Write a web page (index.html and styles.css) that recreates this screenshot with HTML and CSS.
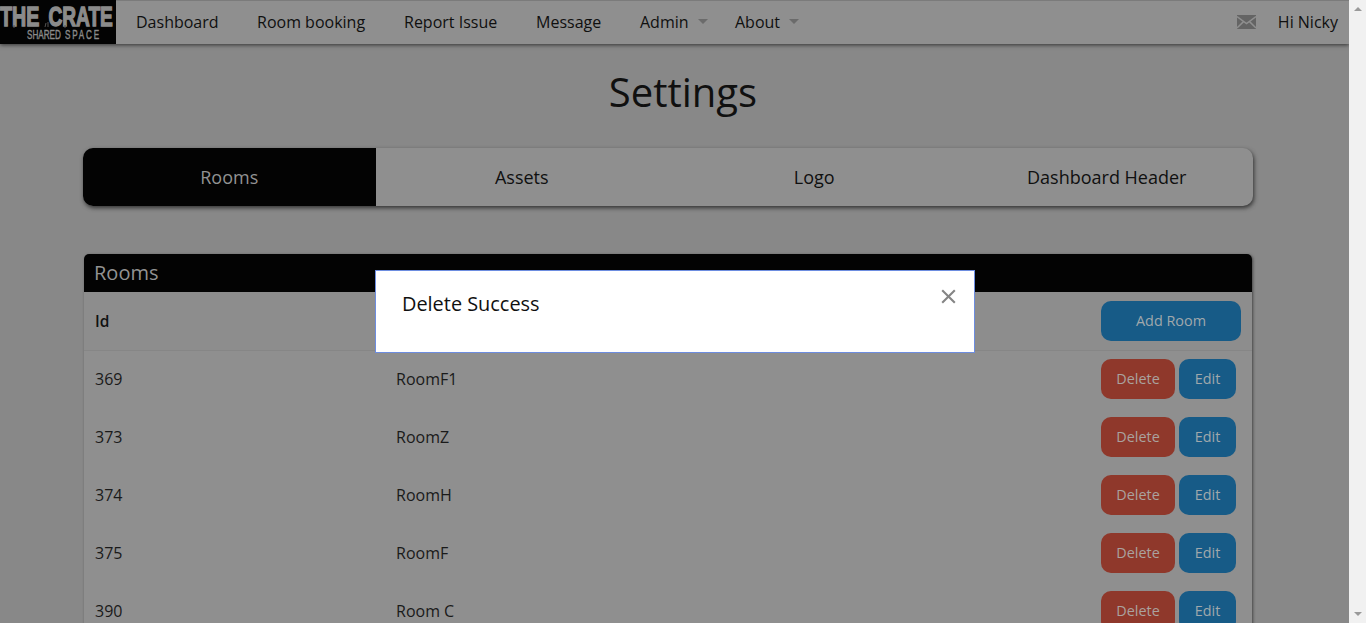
FILE: index.html
```html
<!DOCTYPE html>
<html lang="en">
<head>
<meta charset="utf-8">
<title>Settings</title>
<link rel="stylesheet" href="styles.css">
</head>
<body>
<div class="viewport">
<div class="page">
  <nav class="topbar">
    <svg class="logo" width="116" height="44" viewBox="0 0 116 44">
      <rect width="116" height="44" fill="#030303"/>
      <g fill="#8b8b8b" stroke="#8b8b8b" font-family="Liberation Sans, sans-serif">
        <g font-size="28.5" font-weight="700" stroke-width="1.5">
          <text transform="translate(0 25.5) scale(.69 1)">THE</text>
          <text transform="translate(48.5 25.5) scale(.67 1)">CRATE</text>
        </g>
        <g font-size="12.5" stroke-width=".4">
          <text transform="translate(27 39) scale(.65 1)">SHARED</text>
          <text transform="translate(65 39) scale(.65 1)" letter-spacing="2.8">SPACE</text>
        </g>
      </g>
      <path d="M14 25v3M46 23l-1 4M48 22v5M65 25v3" stroke="#555" stroke-width="1"/>
    </svg>
    <a class="nav n1">Dashboard</a>
    <a class="nav n2">Room booking</a>
    <a class="nav n3">Report Issue</a>
    <a class="nav n4">Message</a>
    <a class="nav n5">Admin<i class="caret"></i></a>
    <a class="nav n6">About<i class="caret"></i></a>
    <div class="user">
      <svg width="19" height="14" viewBox="0 0 19 14"><rect width="19" height="14" fill="#646464"/><path d="M0 1.5l9.5 7 9.5-7M0 13l6.5-6.4M19 13l-6.5-6.4" fill="none" stroke="#8f8f8f" stroke-width="1.5"/></svg>
      <a class="nav n7">Hi Nicky</a>
    </div>
  </nav>
  <h1 class="title">Settings</h1>
  <div class="tabs">
    <a class="tab active">Rooms</a>
    <a class="tab">Assets</a>
    <a class="tab">Logo</a>
    <a class="tab">Dashboard Header</a>
  </div>
  <section class="card">
    <h2 class="card-title">Rooms</h2>
    <div class="row head"><b class="id">Id</b><span class="name"></span><a class="btn add">Add Room</a></div>
    <div class="row"><span class="id">369</span><span class="name">RoomF1</span><a class="btn delete">Delete</a><a class="btn edit">Edit</a></div>
    <div class="row"><span class="id">373</span><span class="name">RoomZ</span><a class="btn delete">Delete</a><a class="btn edit">Edit</a></div>
    <div class="row"><span class="id">374</span><span class="name">RoomH</span><a class="btn delete">Delete</a><a class="btn edit">Edit</a></div>
    <div class="row"><span class="id">375</span><span class="name">RoomF</span><a class="btn delete">Delete</a><a class="btn edit">Edit</a></div>
    <div class="row"><span class="id">390</span><span class="name">Room C</span><a class="btn delete">Delete</a><a class="btn edit">Edit</a></div>
  </section>
</div>
<div class="scrollbar"><i class="up"></i><i class="down"></i></div>
<div class="modal" role="dialog">
  <p class="message">Delete Success</p>
  <svg class="close" width="15" height="15" viewBox="0 0 15 15"><path d="M1.2 1.2l12.6 12.6M13.8 1.2L1.2 13.8" stroke="#858585" stroke-width="2.1"/></svg>
</div>
</div>
</body>
</html>
```
FILE: styles.css
```css
* { box-sizing: border-box; }
body { margin: 0; background: #888; color: #101010; font: 16px "Open Sans", sans-serif; font-weight: 400; }
h1, h2, p { margin: 0; }
.viewport { position: relative; display: flex; height: 623px; overflow: hidden; }
.page { flex: 1; min-width: 0; height: 623px; overflow: hidden; }
.topbar { display: flex; align-items: center; height: 44px; background: #8f8f8f; border-top: 1px solid #7b7b7b; box-shadow: 0 1px 4px #333; }
.logo { flex: none; display: block; margin: -1px 20px 0 0; }
.nav { display: flex; align-items: center; height: 24px; margin-top: -2px; white-space: nowrap; line-height: 24px; }
.n1 { width: 121px; }
.n2 { width: 147px; }
.n3 { width: 132px; }
.n4 { width: 104px; }
.n5 { width: 95px; }
.caret { margin-left: 9px; border: 5px solid transparent; border-top-color: #6b6b6b; border-bottom: 0; }
.user { display: flex; align-items: center; gap: 22px; margin: 0 11px 0 auto; }
.user svg { margin-top: -2px; }
.title { height: 104px; padding: 19px 0 0 17px; text-align: center; font-size: 40px; line-height: 58px; font-weight: 400; }
.tabs { display: flex; width: 1170px; height: 58px; margin-left: 83px; border-radius: 10px; overflow: hidden; background: #8f8f8f; box-shadow: 1px 2px 4px #333; }
.tab { flex: 1; text-align: center; font-size: 18px; line-height: 58px; }
.tab.active { background: #030303; color: #929292; }
.card { width: 1168px; height: 600px; margin: 48px 0 0 84px; border-radius: 5px 5px 0 0; overflow: hidden; background: #8f8f8f; box-shadow: 1px 1px 3px #444; }
.card-title { height: 38px; padding-left: 10px; background: #030303; color: #929292; font-size: 20px; line-height: 37px; font-weight: 400; }
.row { display: flex; align-items: center; height: 58px; padding: 0 0 2px 11px; color: #1a1a1a; }
.row.head { height: 59px; padding-bottom: 0; background: #8d8d8d; border-bottom: 1px solid #868686; }
.id { width: 301px; }
b.id { color: #111; font-weight: 600; font-size: 15.5px; }
.name { width: 705px; }
.btn { height: 40px; border-radius: 10px; background: #175b87; color: #a0a8ac; text-align: center; font-size: 14.4px; line-height: 39px; }
.add { width: 140px; }
.delete { width: 74px; margin-right: 4px; background: #8f382b; color: #aaa29f; }
.edit { width: 57px; }
.scrollbar { display: flex; flex-direction: column; justify-content: space-between; align-items: center; width: 17px; padding: 7px 0 7px; background: #f1f1f1; }
.up, .down { border: 4px solid transparent; }
.up { border-bottom-color: #999; border-top: 0; }
.down { border-top-color: #999; border-bottom: 0; }
.modal { position: absolute; left: 375px; top: 270px; display: flex; justify-content: space-between; width: 600px; height: 83px; padding: 18px 18px 0 26px; border: 1px solid #6d8de0; background: #fff; }
.message { font-size: 19.9px; line-height: 30px; }
.close { display: block; }
```
